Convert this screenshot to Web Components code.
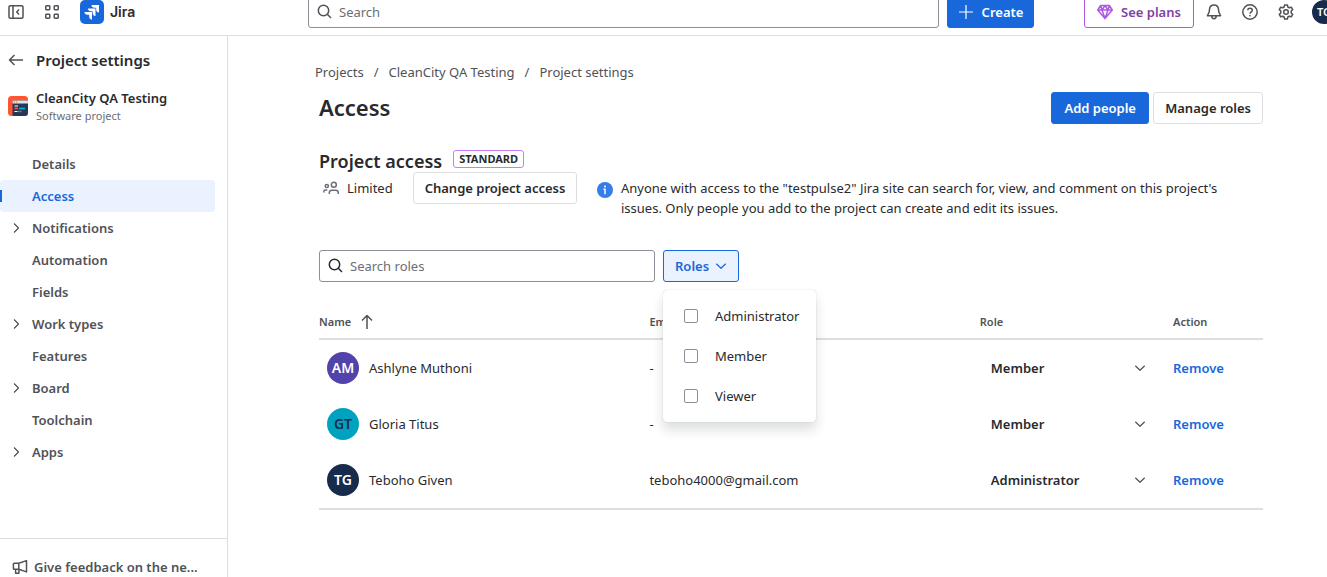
<!DOCTYPE html>
<html lang="en">
<head>
<meta charset="utf-8">
<title>Access - Project settings - Jira</title>
<style>
  body {
    margin: 0;
    background: #fff;
    color: #292a2e;
    font: 400 13px/20px "Noto Sans", "Open Sans", sans-serif;
    --blue: #1868db;
    --blue-soft: #e9f2fe;
    --subtle: #505258;
    --subtlest: #6b6e76;
    --line: #dddee1;
    --field: #8c8f97;
    --purple: #af59e1;
  }
</style>
</head>
<body>
<jira-app>
  <top-bar slot="header"></top-bar>
  <side-nav slot="side" project="CleanCity QA Testing" kind="Software project">
    <nav-item>Details</nav-item>
    <nav-item selected>Access</nav-item>
    <nav-item expandable>Notifications</nav-item>
    <nav-item>Automation</nav-item>
    <nav-item>Fields</nav-item>
    <nav-item expandable>Work types</nav-item>
    <nav-item>Features</nav-item>
    <nav-item expandable>Board</nav-item>
    <nav-item>Toolchain</nav-item>
    <nav-item expandable>Apps</nav-item>
  </side-nav>
  <access-page></access-page>
</jira-app>

<script>
const define = (name, css, html, setup) => {
  const template = document.createElement('template');
  template.innerHTML = `<style>:host,*{box-sizing:border-box}${css}</style>${html}`;
  customElements.define(name, class extends HTMLElement {
    connectedCallback() {
      if (this.shadowRoot) return;
      this.attachShadow({ mode: 'open' }).append(template.content.cloneNode(true));
      if (setup) setup(this, this.shadowRoot);
    }
  });
};

const ICONS = {
  collapse: '<rect x="1" y="1.75" width="14" height="12.5" rx="1.2"/><path d="M5 1.75v12.5M11 5.6 8.7 8l2.3 2.4"/>',
  apps: '<rect x="1.75" y="1.75" width="4" height="4" rx=".7"/><rect x="10.25" y="1.75" width="4" height="4" rx=".7"/><rect x="1.75" y="10.25" width="4" height="4" rx=".7"/><rect x="10.25" y="10.25" width="4" height="4" rx=".7"/>',
  search: '<circle cx="6.5" cy="6.5" r="5.2"/><path d="m10.3 10.3 3.7 3.7"/>',
  plus: '<path d="M8 1v14M1 8h14"/>',
  gem: '<path d="M3.6 1.5h8.8L15.3 6 8 14.6.7 6zM.7 6h14.6M5 6l3 8.4L11 6M3.6 1.5 5 6l3-4.5L11 6l1.4-4.5"/>',
  bell: '<path d="M8 1C5.2 1 3.7 3 3.5 5.2L3.2 8 1.4 11.8h13.2L12.8 8l-.3-2.8C12.3 3 10.8 1 8 1zM5.800 12c0 1.700.9 2.700 2.200 2.700s2.200-1 2.200-2.700"/>',
  help: '<circle cx="8" cy="8" r="7.2"/><path d="M5.8 6.3C5.8 4.9 6.7 4.200 8 4.200s2.300.8 2.300 2C10.300 7.900 8 7.700 8 9.700"/><circle cx="8" cy="11.700" r=".5" fill="currentColor" stroke-width=".8"/>',
  gear: '<path d="M6.600 1h2.800l.5 2 1.400.8 2-.6 1.400 2.400L13.200 7v2l1.500 1.400-1.400 2.400-2-.6-1.400.8-.5 2H6.600l-.5-2-1.400-.8-2 .6-1.400-2.400L2.800 9V7L1.300 5.600l1.400-2.400 2 .6 1.400-.8z"/><circle cx="8" cy="8" r="2.300"/>',
  back: '<path d="M15 8H1.500M6.500 3 1.500 8l5 5"/>',
  up: '<path d="M8 15V1.500M3 6.500l5-5 5 5"/>',
  right: '<path d="m6 3.500 4.500 4.500L6 12.500"/>',
  down: '<path d="M3.300 5.700 8 10.300l4.700-4.600"/>',
  megaphone: '<path d="M6.800 4.300 14.500 1.600v11.300L6.800 10.300H2.200a.8.8 0 0 1-.8-.8V5.100a.8.8 0 0 1 .8-.8zM6.800 4.300v6M3.600 10.500v3.800h3.300v-3.800"/>',
  people: '<circle cx="10.800" cy="4.800" r="2.500"/><circle cx="3.800" cy="6" r="1.600"/><path d="M6.300 14v-1.200c0-1.600 1-2.600 2.600-2.600h3.800c1.600 0 2.600 1 2.600 2.600V14M.8 12.600v-.8c0-1 .7-1.700 1.700-1.700h1.800"/>'
};

define('app-icon', `
  :host { display: inline-flex; flex: none; }
  svg { display: block; overflow: visible; }
`, '<svg width="16" height="16" viewBox="0 0 16 16" fill="none" stroke="currentColor" stroke-width="1.5" stroke-linejoin="round" aria-hidden="true"></svg>',
(host, root) => {
  const svg = root.querySelector('svg');
  if (host.hasAttribute('thin')) svg.setAttribute('stroke-width', '1.2');
  svg.innerHTML = ICONS[host.getAttribute('name')];
});

define('user-avatar', `
  :host { display: inline-flex; flex: none; width: 32px; height: 32px; border-radius: 50%;
    align-items: center; justify-content: center; background: #172b4d; color: #fff;
    font-size: 14px; font-weight: 600; line-height: 20px; }
  :host([small]) { width: 24px; height: 24px; font-size: 11px; }
  :host([tone="purple"]) { background: #5243aa; }
  :host([tone="teal"]) { background: #00a3bf; color: #172b4d; }
`, '<slot></slot>');

define('ui-button', `
  :host { display: inline-flex; flex: none; }
  button { display: inline-flex; align-items: center; justify-content: center; gap: 8px; width: 100%;
    height: 32px; padding: 0 11px; border: 1px solid var(--line); border-radius: 3px;
    background: #fff; color: inherit; font: inherit; font-weight: 600; white-space: nowrap; }
  :host([look="primary"]) button { background: var(--blue); border-color: var(--blue); color: #fff; }
  :host([look="discovery"]) button { border-color: var(--purple); color: #803fa5; }
  :host([look="selected"]) button { gap: 4px; padding: 0 8px 0 11px; justify-content: flex-start; background: var(--blue-soft); border-color: var(--blue); color: var(--blue); }
  :host([look="icon"]) button { width: 32px; padding: 0; border: 0; background: none; color: var(--subtle); }
`, '<button type="button"><slot></slot></button>', (host, root) => {
  const label = host.getAttribute('label');
  if (label) root.querySelector('button').setAttribute('aria-label', label);
});

define('search-field', `
  :host { display: block; color: var(--subtle); }
  :host([strong]) { color: #292a2e; }
  label { display: flex; align-items: center; gap: 6px; height: 32px; padding: 0 8px;
    border: 1px solid var(--field); border-radius: 3px; background: #fff; }
  input { flex: 1; min-width: 0; padding: 0; border: 0; outline: 0; background: none; color: #292a2e; font: inherit; }
  input::placeholder { color: var(--subtlest); opacity: 1; }
`, '<label><app-icon name="search"></app-icon><input type="text"></label>', (host, root) => {
  const input = root.querySelector('input');
  input.placeholder = host.getAttribute('placeholder');
  input.setAttribute('aria-label', input.placeholder);
});

define('jira-app', `
  :host { display: flex; flex-direction: column; height: 100vh; overflow: hidden; }
  .body { display: flex; flex: 1; min-height: 0; }
  main { flex: 1; min-width: 0; }
`, '<slot name="header"></slot><div class="body"><slot name="side"></slot><main><slot></slot></main></div>');

define('top-bar', `
  :host { display: block; flex: none; }
  header { display: flex; align-items: flex-end; height: 36px; padding-bottom: 7px; border-bottom: 1px solid var(--line); }
  .home { display: flex; align-items: center; flex: none; width: 308px; height: 32px; gap: 4px; }
  .brand { display: flex; align-items: center; gap: 6px; margin-left: 8px; color: #292a2e;
    font: 600 14px/20px Inter, sans-serif; text-decoration: none; }
  search-field { flex: 1; margin-right: 8px; }
  .tools { display: flex; align-items: center; flex: none; gap: 4px; height: 32px; margin: 0 -9px 0 50px; }
  .create { width: 87px; }
  .plans { width: 110px; }
  .plans app-icon { color: var(--purple); }
  user-avatar { margin-left: 6px; }
`, `
  <header>
    <div class="home">
      <ui-button look="icon" label="Collapse sidebar"><app-icon name="collapse"></app-icon></ui-button>
      <ui-button look="icon" label="Switch apps"><app-icon name="apps"></app-icon></ui-button>
      <a class="brand" href="#">
        <svg width="24" height="24" viewBox="0 0 24 24" aria-hidden="true">
          <rect width="24" height="24" rx="5" fill="#1868db"/>
          <path fill="#fff" d="M11.500 5H19v7.500c-1.800 0-2.800-1.200-2.800-2.700V7.800h-2c-1.500 0-2.700-1-2.700-2.800z"/>
          <path fill="#fff" d="M8 8.500h7.500V16c-1.800 0-2.800-1.200-2.800-2.700v-2h-2C9.200 11.300 8 10.300 8 8.500z"/>
          <path fill="#fff" d="M4.500 12H12v7.500c-1.800 0-2.800-1.200-2.800-2.700v-2h-2c-1.500 0-2.700-1-2.700-2.800z"/>
        </svg>Jira</a>
    </div>
    <search-field placeholder="Search"></search-field>
    <ui-button class="create" look="primary"><app-icon name="plus" thin></app-icon>Create</ui-button>
    <div class="tools">
      <ui-button class="plans" look="discovery"><app-icon name="gem"></app-icon>See plans</ui-button>
      <ui-button look="icon" label="Notifications"><app-icon name="bell"></app-icon></ui-button>
      <ui-button look="icon" label="Help"><app-icon name="help"></app-icon></ui-button>
      <ui-button look="icon" label="Settings"><app-icon name="gear"></app-icon></ui-button>
      <user-avatar small>TG</user-avatar>
    </div>
  </header>`);

define('nav-item', `
  :host { display: block; }
  a { display: grid; grid-template-columns: 32px 1fr; align-items: center; height: 32px; border-radius: 4px;
    color: var(--subtle); font-weight: 600; text-decoration: none; }
  app-icon { grid-column: 1; justify-self: center; }
  span { grid-column: 2; }
  :host(:not([expandable])) app-icon { display: none; }
  :host([selected]) a { background: linear-gradient(var(--blue), var(--blue)) 0 50% / 2px 12px no-repeat, var(--blue-soft); color: var(--blue); }
`, '<a href="#"><app-icon name="right" thin></app-icon><span><slot></slot></span></a>');

define('side-nav', `
  :host { display: flex; flex-direction: column; flex: none; width: 228px; height: calc(100% + 6px); border-right: 1px solid var(--line); }
  .back { display: flex; align-items: center; gap: 12px; margin-top: 12px; padding: 0 8px; height: 24px; color: var(--subtle); }
  h2 { margin: 0; color: #292a2e; font-size: 15px; font-weight: 600; line-height: 24px; }
  .project { display: flex; align-items: center; gap: 8px; margin-top: 16px; padding: 0 8px; }
  .name { font-weight: 600; line-height: 20px; }
  .kind { color: var(--subtlest); font-size: 11px; line-height: 16px; }
  nav { flex: 1; margin-top: 24px; padding-right: 12px; }
  footer { display: flex; height: 45px; padding: 12px 12px 0; border-top: 1px solid var(--line); }
  footer a { display: flex; align-items: center; gap: 6px; height: 32px; color: var(--subtle); font-weight: 600; text-decoration: none; white-space: nowrap; }
`, `
  <div class="back"><app-icon name="back"></app-icon><h2>Project settings</h2></div>
  <div class="project">
    <svg width="20" height="20" viewBox="0 0 20 20" aria-hidden="true">
      <defs><clipPath id="r"><rect width="20" height="20" rx="3.5"/></clipPath></defs>
      <g clip-path="url(#r)">
        <rect width="20" height="20" fill="#ff5630"/>
        <path fill="#253858" d="M4.500 4.500H20V20H6a1.500 1.500 0 0 1-1.500-1.500z"/>
        <path fill="#dfe1e6" d="M4.500 4.500H20v3H4.500z"/>
        <path stroke="#ff5630" stroke-width="1" d="M6 6h1M8 6h1"/>
        <path stroke="#00b8d9" stroke-width="1.300" d="M11 12.500h6M10 15.500h1"/>
        <path stroke="#fff" stroke-width="1.200" d="M6.500 10h3.500M6.500 15.500h3"/>
        <path stroke="#ff5630" stroke-width="1.300" d="M6.500 12.500h3.500M11.500 15.500h2"/>
      </g>
    </svg>
    <div><div class="name"></div><div class="kind"></div></div>
  </div>
  <nav aria-label="Project settings"><slot></slot></nav>
  <footer><a href="#"><app-icon name="megaphone"></app-icon>Give feedback on the ne...</a></footer>
`, (host, root) => {
  root.querySelector('.name').textContent = host.getAttribute('project');
  root.querySelector('.kind').textContent = host.getAttribute('kind');
});

define('role-filter', `
  :host { display: block; position: relative; }
  ui-button { width: 76px; }
  .menu { position: absolute; z-index: 2; top: 40px; left: 0; width: 153px; padding: 6px 0; border-radius: 4px;
    background: #fff; box-shadow: 0 8px 12px #1e1f2126, 0 0 1px #1e1f214f; }
  label { display: flex; align-items: center; gap: 17px; height: 40px; padding-left: 21px; }
  input { appearance: none; width: 14px; height: 14px; margin: 0; border: 1px solid var(--field); border-radius: 2px; background: #fff; }
`, `
  <ui-button look="selected">Roles<app-icon name="down" thin></app-icon></ui-button>
  <div class="menu">
    <label><input type="checkbox">Administrator</label>
    <label><input type="checkbox">Member</label>
    <label><input type="checkbox">Viewer</label>
  </div>`);

define('member-table', `
  :host { display: block; }
  table { width: 100%; table-layout: fixed; border-spacing: 0; border-bottom: 2px solid var(--line); }
  th, td { padding: 0; text-align: left; }
  th { height: 34px; border-bottom: 2px solid var(--line); color: var(--subtle); font-size: 11px; font-weight: 600; line-height: 16px; }
  th span { display: flex; align-items: center; gap: 8px; }
  td { height: 56px; }
  .person { display: flex; align-items: center; gap: 10px; padding-left: 8px; }
  .wide { width: 35%; }
  .action { width: 90px; }
  .role { display: grid; align-items: center; margin-right: 21px; }
  .role > * { grid-area: 1 / 1; }
  .role app-icon { justify-self: end; margin-right: 4px; pointer-events: none; color: var(--subtle); }
  select { appearance: none; width: 100%; height: 32px; padding: 0 32px 0 11px; border: 0; background: none; color: inherit; font: inherit; font-weight: 600; }
  a { color: var(--blue); font-weight: 600; text-decoration: none; }
`, `
  <table>
    <thead><tr>
      <th class="wide"><span>Name<app-icon name="up"></app-icon></span></th>
      <th class="wide">Email</th><th>Role</th><th class="action">Action</th>
    </tr></thead>
    <tbody></tbody>
  </table>`, (host, root) => {
  const members = [
    ['AM', 'purple', 'Ashlyne Muthoni', '-', 'Member'],
    ['GT', 'teal', 'Gloria Titus', '-', 'Member'],
    ['TG', 'navy', 'Teboho Given', 'teboho4000@gmail.com', 'Administrator']
  ];
  root.querySelector('tbody').innerHTML = members.map(([initials, tone, name, email, role]) => `
    <tr>
      <td><div class="person"><user-avatar tone="${tone}">${initials}</user-avatar>${name}</div></td>
      <td>${email}</td>
      <td><div class="role"><select aria-label="Role of ${name}"><option>${role}</option></select><app-icon name="down" thin></app-icon></div></td>
      <td><a href="#">Remove</a></td>
    </tr>`).join('');
});

define('access-page', `
  :host { display: block; padding: 26px 64px 0 91px; }
  .crumbs { display: flex; gap: 10px; margin-left: -4px; color: var(--subtle); }
  .crumbs a { color: inherit; text-decoration: none; }
  .title { display: flex; align-items: flex-start; gap: 4px; margin-top: 10px; }
  .add { width: 98px; }
  h1 { flex: 1; margin: 0; font-size: 22px; font-weight: 600; line-height: 30px; }
  .section { display: flex; align-items: flex-start; gap: 11px; height: 24px; margin-top: 24px; }
  h2 { margin: 0; font-size: 18px; font-weight: 600; line-height: 26px; }
  .tag { width: 71px; height: 18px; margin-top: 2px; border: 1px solid #c97cf4; border-radius: 3px; text-align: center; font-size: 11px; font-weight: 700; line-height: 16px; }
  .access { display: flex; align-items: flex-start; }
  .level { display: flex; align-items: center; gap: 8px; width: 94px; height: 32px; padding-left: 4px; }
  .level app-icon { color: var(--subtlest); }
  .change { width: 164px; }
  .info { display: flex; gap: 8px; max-width: 660px; margin: 6px 0 0 20px; }
  .info svg { flex: none; margin-top: 4px; }
  .info p { margin: 0; }
  .filters { display: flex; gap: 8px; margin-top: 32px; }
  search-field { width: 336px; }
  member-table { margin-top: 24px; }
`, `
  <nav class="crumbs" aria-label="Breadcrumbs"><a href="#">Projects</a><span>/</span><a href="#">CleanCity QA Testing</a><span>/</span><a href="#">Project settings</a></nav>
  <div class="title"><h1>Access</h1><ui-button class="add" look="primary">Add people</ui-button><ui-button>Manage roles</ui-button></div>
  <div class="section"><h2>Project access</h2><span class="tag">STANDARD</span></div>
  <div class="access">
    <div class="level"><app-icon name="people"></app-icon>Limited</div>
    <ui-button class="change">Change project access</ui-button>
    <div class="info">
      <svg width="16" height="16" viewBox="0 0 16 16" aria-hidden="true"><circle cx="8" cy="8" r="8" fill="#357de8"/><circle cx="8" cy="4.600" r="1" fill="#fff"/><path fill="none" stroke="#fff" stroke-width="1.500" d="M6.500 7.200H8v5"/></svg>
      <p>Anyone with access to the "testpulse2" Jira site can search for, view, and comment on this project's issues. Only people you add to the project can create and edit its issues.</p>
    </div>
  </div>
  <div class="filters"><search-field strong placeholder="Search roles"></search-field><role-filter></role-filter></div>
  <member-table></member-table>`);
</script>
</body>
</html>
